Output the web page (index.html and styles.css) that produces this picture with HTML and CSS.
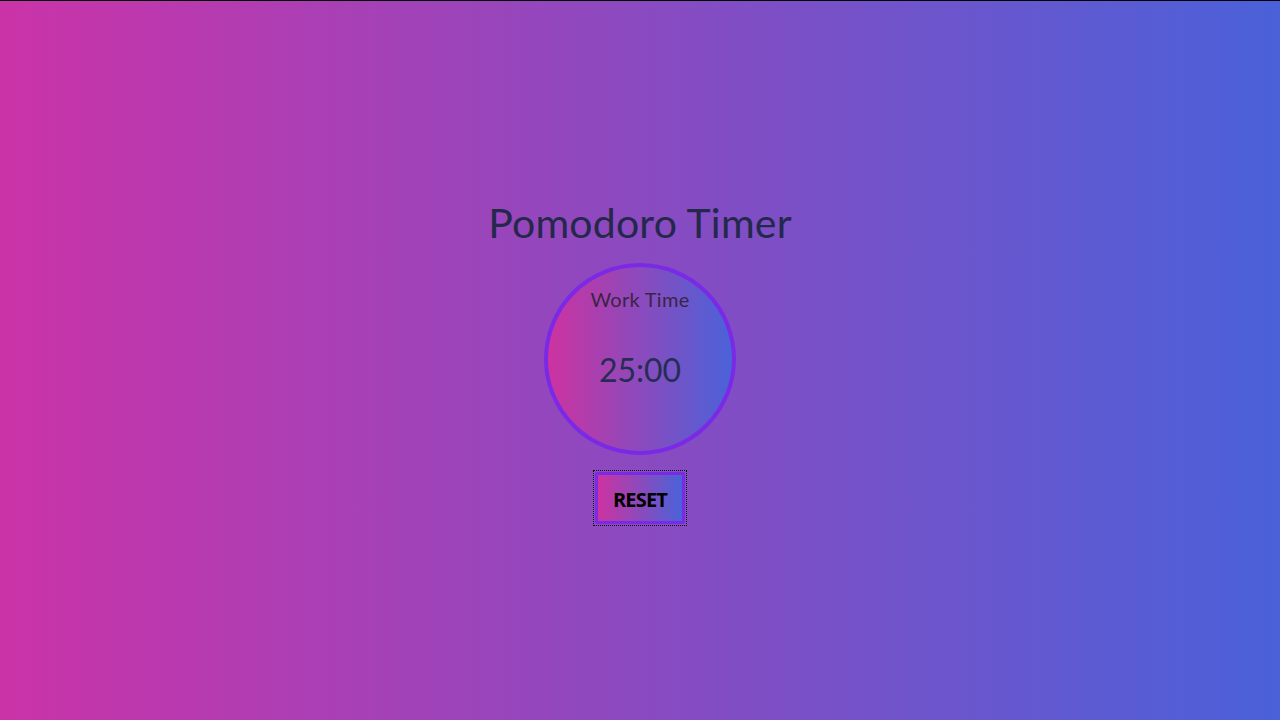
FILE: index.html
```html
<!DOCTYPE html>
<html>
<head>
<meta charset="utf-8">
<link rel="stylesheet" href="styles.css">
</head>
<body>
<main class="app">
  <h1 class="title">Pomodoro Timer</h1>
  <div class="clock">
    <div class="mode">Work Time</div>
    <div class="time">25:00</div>
  </div>
  <div class="focus-ring">
    <button class="reset">RESET</button>
  </div>
</main>
</body>
</html>
```
FILE: styles.css
```css
html, body {
  margin: 0;
  padding: 0;
  height: 100%;
}
body {
  border-top: 1px solid #000;
  box-sizing: border-box;
  background: linear-gradient(to right, #cb33a8, #4a61d9);
  font-family: "Lato", "Open Sans", sans-serif;
  color: #262b4a;
}
.app {
  height: 100%;
  box-sizing: border-box;
  padding-top: 4px;
  display: flex;
  flex-direction: column;
  align-items: center;
  justify-content: center;
}
.title {
  margin: 0 0 16px;
  font-size: 41px;
  font-weight: 400;
  letter-spacing: 0.2px;
  line-height: 48px;
  color: #24284a;
}
.clock {
  width: 184px;
  height: 184px;
  border: 4px solid #7a2ae6;
  border-radius: 50%;
  background: linear-gradient(to right, #cc33a0, #4a62d9);
  display: flex;
  flex-direction: column;
  align-items: center;
  box-sizing: content-box;
}
.mode {
  margin-top: 20px;
  font-size: 20px;
  letter-spacing: 0.3px;
  line-height: 24px;
  color: #3a2446;
}
.time {
  margin-top: 39px;
  font-size: 32px;
  line-height: 40px;
  color: #252d55;
}
.focus-ring {
  margin-top: 15px;
  border: 1px dotted #000;
  padding: 1px;
  display: flex;
}
.reset {
  width: 90px;
  height: 52px;
  box-sizing: border-box;
  border: 3px solid #7a2ae6;
  border-radius: 2px;
  background: linear-gradient(to right, #cc33a0, #4a62d9);
  font-family: "Open Sans", sans-serif;
  font-weight: 700;
  font-size: 20px;
  letter-spacing: -0.8px;
  color: #000;
  padding: 2px 0 0;
}
```
